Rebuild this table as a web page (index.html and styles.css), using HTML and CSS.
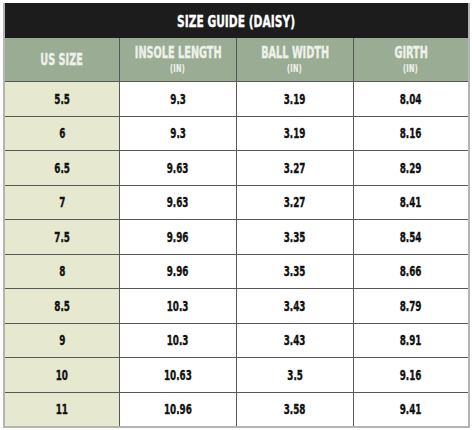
FILE: index.html
```html
<!DOCTYPE html>
<html>
<head>
<meta charset="utf-8">
<link rel="stylesheet" href="styles.css">
</head>
<body>
<div class="page">
  <div class="table">
    <div class="title"><span class="t">SIZE GUIDE (DAISY)</span></div>
    <div class="grid">
      <div class="hd"><span class="t">US SIZE</span></div>
      <div class="hd"><span class="t">INSOLE LENGTH</span><span class="t unit">(IN)</span></div>
      <div class="hd"><span class="t">BALL WIDTH</span><span class="t unit">(IN)</span></div>
      <div class="hd"><span class="t">GIRTH</span><span class="t unit">(IN)</span></div>

      <div class="sz"><span class="t">5.5</span></div><div class="c"><span class="t">9.3</span></div><div class="c"><span class="t">3.19</span></div><div class="c"><span class="t">8.04</span></div>
      <div class="sz"><span class="t">6</span></div><div class="c"><span class="t">9.3</span></div><div class="c"><span class="t">3.19</span></div><div class="c"><span class="t">8.16</span></div>
      <div class="sz"><span class="t">6.5</span></div><div class="c"><span class="t">9.63</span></div><div class="c"><span class="t">3.27</span></div><div class="c"><span class="t">8.29</span></div>
      <div class="sz"><span class="t">7</span></div><div class="c"><span class="t">9.63</span></div><div class="c"><span class="t">3.27</span></div><div class="c"><span class="t">8.41</span></div>
      <div class="sz"><span class="t">7.5</span></div><div class="c"><span class="t">9.96</span></div><div class="c"><span class="t">3.35</span></div><div class="c"><span class="t">8.54</span></div>
      <div class="sz"><span class="t">8</span></div><div class="c"><span class="t">9.96</span></div><div class="c"><span class="t">3.35</span></div><div class="c"><span class="t">8.66</span></div>
      <div class="sz"><span class="t">8.5</span></div><div class="c"><span class="t">10.3</span></div><div class="c"><span class="t">3.43</span></div><div class="c"><span class="t">8.79</span></div>
      <div class="sz"><span class="t">9</span></div><div class="c"><span class="t">10.3</span></div><div class="c"><span class="t">3.43</span></div><div class="c"><span class="t">8.91</span></div>
      <div class="sz"><span class="t">10</span></div><div class="c"><span class="t">10.63</span></div><div class="c"><span class="t">3.5</span></div><div class="c"><span class="t">9.16</span></div>
      <div class="sz"><span class="t">11</span></div><div class="c"><span class="t">10.96</span></div><div class="c"><span class="t">3.58</span></div><div class="c"><span class="t">9.41</span></div>
    </div>
  </div>
</div>
</body>
</html>
```

FILE: styles.css
```css
html, body {
  margin: 0;
  padding: 0;
  background: #ffffff;
}
.page {
  padding: 3px 2px 3px 3px;
  font-family: "DejaVu Sans Condensed", "DejaVu Sans", sans-serif;
  font-weight: bold;
}
.t {
  display: inline-block;
  white-space: nowrap;
  transform: scaleX(0.72);
  transform-origin: center;
  -webkit-text-stroke: 0.35px currentColor;
}
.table {
  width: 463px;
  border: 2px solid #b4b4b4;
  border-top: 0;
  display: flex;
  flex-direction: column;
}
.title {
  height: 34px;
  background: #1c1c1c;
  color: #ffffff;
  font-size: 16.5px;
  display: flex;
  align-items: center;
  justify-content: center;
  padding-top: 1px;
}
.grid {
  display: grid;
  grid-template-columns: 114px 116px 116px 1fr;
  grid-template-rows: 43px repeat(10, 33.5px);
  gap: 1px;
  background: #585858;
}
.hd {
  background: #9aac94;
  color: #eef1ea;
  font-size: 15px;
  display: flex;
  flex-direction: column;
  align-items: center;
  justify-content: center;
  line-height: 16px;
}
.hd .unit {
  font-size: 10px;
  line-height: 12px;
  margin-top: 2px;
  letter-spacing: 0.5px;
  -webkit-text-stroke: 0.2px currentColor;
}
.sz, .c {
  display: flex;
  align-items: center;
  justify-content: center;
  font-size: 14px;
  color: #111111;
}
.sz .t, .c .t {
  transform: scaleX(0.7);
}
.sz {
  background: #e6e9d0;
}
.c {
  background: #ffffff;
}
```
